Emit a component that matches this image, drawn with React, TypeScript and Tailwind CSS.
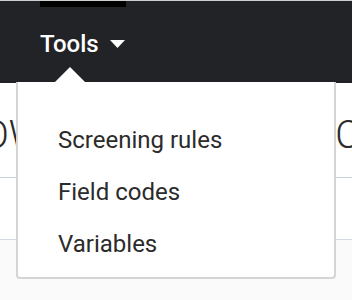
export default function App() {
  const items = ["Screening rules", "Field codes", "Variables"];

  return (
    <div className="relative w-[352px] h-[300px] overflow-hidden bg-[#fafafa] font-['Roboto',sans-serif]">
      {/* Header */}
      <div className="h-[83px] border-t border-[#cfcfcf] bg-[#222327] flex pl-[40px]">
        <div className="flex flex-col w-[86px]">
          <div className="h-[6px] bg-black" />
          <div className="flex items-center gap-[11px] mt-[25px] text-white text-[24px] font-medium leading-none">
            <span>Tools</span>
            <svg width="15" height="8" viewBox="0 0 15 8">
              <path d="M0 0h15L7.5 8z" fill="#fff" />
            </svg>
          </div>
        </div>
      </div>

      {/* Page behind */}
      <div className="bg-white">
        <div className="h-[95px] border-b border-[#c8d0da] flex justify-between items-center text-[#2a2a2a] text-[38px] font-light leading-none">
          <span className="-ml-[17px] mt-[10px]">OW</span>
          <span className="-mr-[8px] mt-[10px]">C</span>
        </div>
        <div className="h-[62px] border-b border-[#d4dbe3]" />
      </div>

      {/* Dropdown */}
      <div className="absolute left-[55px] top-[67px] w-0 h-0 border-l-[15px] border-r-[15px] border-b-[15px] border-l-transparent border-r-transparent border-b-white" />
      <div className="absolute left-[16px] top-[82px] w-[320px] h-[197px] bg-white border-2 border-t-0 border-[#d5d5d5] rounded-b-[4px] pl-[40px] pt-[46px]">
        <ul className="flex flex-col gap-[28px] text-[#2b2b2b] text-[24px] leading-[24px]">
          {items.map((t) => (
            <li key={t}>{t}</li>
          ))}
        </ul>
      </div>
    </div>
  );
}
